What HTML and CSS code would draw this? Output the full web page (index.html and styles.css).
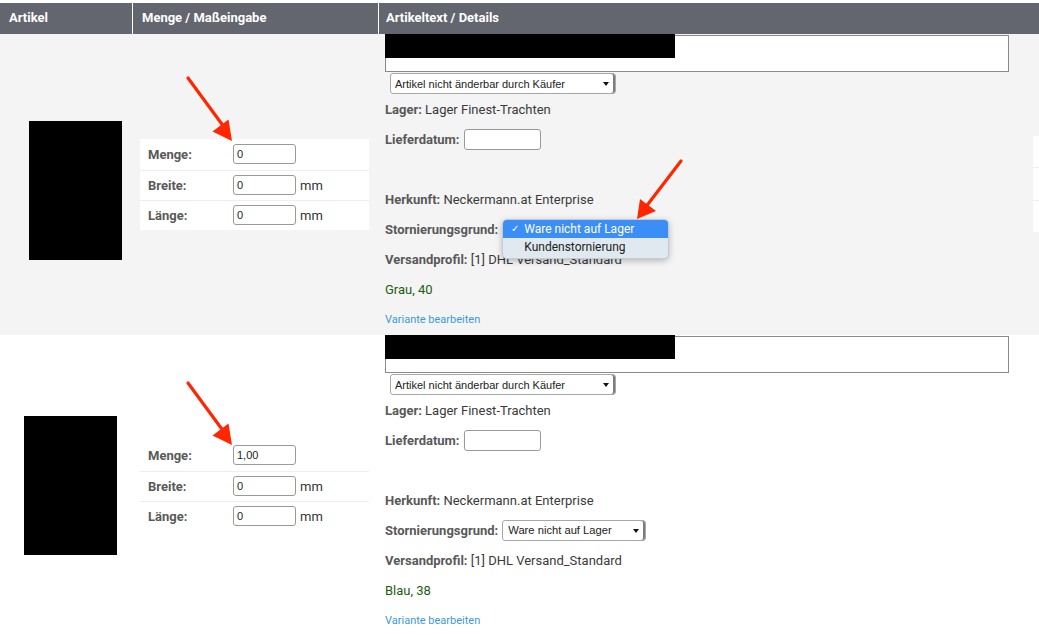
FILE: index.html
```html
<!DOCTYPE html>
<html lang="de">
<head>
<meta charset="utf-8">
<title>Artikel</title>
<link rel="stylesheet" href="styles.css">
</head>
<body>
<div class="page">
  <div class="grid head">
    <div class="hcell">Artikel</div>
    <div class="hcell">Menge / Maßeingabe</div>
    <div class="hcell last">Artikeltext / Details</div>
  </div>

  <div class="grid row alt">
    <div class="c1 c1-first"><div class="img"></div></div>
    <div class="c2">
      <table class="dims">
        <tr><td class="lab">Menge:</td><td><span class="inp">0</span></td></tr>
        <tr><td class="lab">Breite:</td><td><span class="inp">0</span><span class="unit">mm</span></td></tr>
        <tr><td class="lab">Länge:</td><td><span class="inp">0</span><span class="unit">mm</span></td></tr>
      </table>
    </div>
    <div class="c3">
      <div class="tbox"><div class="redact"></div></div>
      <div class="selrow"><span class="sel sel-wide"><span class="seltext">Artikel nicht änderbar durch Käufer</span><span class="caret"></span></span></div>
      <div class="line"><b>Lager:</b>&nbsp;Lager Finest-Trachten</div>
      <div class="line"><b>Lieferdatum:</b><span class="date"></span></div>
      <div class="line"></div>
      <div class="line"><b>Herkunft:</b>&nbsp;Neckermann.at Enterprise</div>
      <div class="line"><b>Stornierungsgrund:</b><span class="anchor"><span class="menu"><span class="opt on"><span class="chk">✓</span>Ware nicht auf Lager</span><span class="opt">Kundenstornierung</span></span></span></div>
      <div class="line"><b>Versandprofil:</b>&nbsp;[1] DHL Versand_Standard</div>
      <div class="line green">Grau, 40</div>
      <div class="line link">Variante bearbeiten</div>
    </div>
    <div class="edge"><span></span><span></span><span></span></div>
  </div>

  <div class="grid row">
    <div class="c1 c1-second"><div class="img"></div></div>
    <div class="c2">
      <table class="dims">
        <tr><td class="lab">Menge:</td><td><span class="inp">1,00</span></td></tr>
        <tr><td class="lab">Breite:</td><td><span class="inp">0</span><span class="unit">mm</span></td></tr>
        <tr><td class="lab">Länge:</td><td><span class="inp">0</span><span class="unit">mm</span></td></tr>
      </table>
    </div>
    <div class="c3">
      <div class="tbox"><div class="redact"></div></div>
      <div class="selrow"><span class="sel sel-wide"><span class="seltext">Artikel nicht änderbar durch Käufer</span><span class="caret"></span></span></div>
      <div class="line"><b>Lager:</b>&nbsp;Lager Finest-Trachten</div>
      <div class="line"><b>Lieferdatum:</b><span class="date"></span></div>
      <div class="line"></div>
      <div class="line"><b>Herkunft:</b>&nbsp;Neckermann.at Enterprise</div>
      <div class="line"><b>Stornierungsgrund:</b><span class="sel sel-storno"><span class="seltext big">Ware nicht auf Lager</span><span class="caret"></span></span></div>
      <div class="line"><b>Versandprofil:</b>&nbsp;[1] DHL Versand_Standard</div>
      <div class="line green">Blau, 38</div>
      <div class="line link">Variante bearbeiten</div>
    </div>
  </div>

  <svg class="arrows" width="1039" height="635" viewBox="0 0 1039 635">
    <g stroke="#ff2600" stroke-width="3.2" stroke-linecap="round" fill="#ff2600">
      <line x1="188" y1="78" x2="224" y2="127"/>
      <polygon stroke="none" points="232,141 212.5,131.5 228.5,119.5"/>
      <line x1="681" y1="161" x2="645" y2="208"/>
      <polygon stroke="none" points="637,219 640,199 656,211"/>
      <line x1="188" y1="383" x2="224" y2="432"/>
      <polygon stroke="none" points="232,445 212.5,435.5 228.5,423.5"/>
    </g>
  </svg>
</div>
</body>
</html>
```

FILE: styles.css
```css
* { box-sizing: border-box; }
html, body { margin: 0; padding: 0; background: #fff; }
body {
  font-family: Roboto, "Liberation Sans", Arial, sans-serif;
  font-size: 13px;
  color: #3a3a3a;
}
.page { position: relative; width: 1039px; height: 635px; overflow: hidden; padding-top: 3px; }

.grid { display: grid; grid-template-columns: 133px 246px 1fr; }

.head { height: 31px; background: #63656f; }
.hcell {
  color: #fff; font-weight: 700; font-size: 13px;
  padding-left: 9px; line-height: 30px;
  border-right: 1px solid #fff;
}
.hcell.last { border-right: none; padding-left: 7px; }

.row { height: 301px; position: relative; }
.row.alt { background: #f4f4f4; }

.c1 { display: flex; align-items: center; }
.c1-first { padding-left: 29px; padding-top: 12px; }
.c1-second { padding-left: 24px; }
.img { width: 93px; height: 139px; background: #000; }

.c2 { display: flex; align-items: center; padding-left: 7px; }
.dims { width: 229px; background: #fff; border-collapse: collapse; }
.dims td { padding: 0; height: 30px; vertical-align: middle; }
.dims tr:first-child td { height: 31px; }
.dims tr + tr td { border-top: 1px solid #eeeeee; }
.dims .lab { width: 93px; padding-left: 8px; font-weight: 700; color: #595959; }
.inp {
  display: inline-block; vertical-align: middle;
  width: 63px; height: 20px; border: 1px solid #9a9a9a; border-radius: 3px;
  background: #fff; padding-left: 3px;
  font-family: "Liberation Sans", Arial, sans-serif; font-size: 11px; line-height: 18px; color: #222;
}
.unit { margin-left: 4px; vertical-align: middle; color: #333; }

.c3 { padding-left: 6px; }
.tbox {
  position: relative; margin-top: 1px;
  width: 624px; height: 37px; border: 1px solid #8a8a8a; background: #fff;
}
.redact { position: absolute; left: -1px; top: -2px; width: 290px; height: 24px; background: #000; }

.selrow { margin: 1px 0 0 5px; height: 21px; display: flex; }
.sel {
  display: inline-flex; align-items: center; height: 21px;
  border: 1px solid #a8a8a8; border-radius: 3px; background: #fff;
  box-shadow: inset -2px 0 0 #7c7c7c;
  font-family: "Liberation Sans", Arial, sans-serif; font-size: 11px; color: #222;
}
.sel-wide { width: 226px; }
.sel-storno { width: 144px; margin-left: 4px; }
.seltext { flex: 1; padding-left: 4px; white-space: nowrap; }
.seltext.big { padding-left: 5px; font-size: 11.2px; }
.caret { width: 16px; height: 100%; position: relative; }
.caret::after {
  content: ""; position: absolute; left: 4px; top: 8px;
  border-left: 3px solid transparent; border-right: 3px solid transparent;
  border-top: 4px solid #111;
}

.line { height: 30px; display: flex; align-items: center; white-space: nowrap; }
.line b { color: #595959; font-weight: 700; }
.date {
  display: inline-block; margin-left: 4px; width: 77px; height: 21px;
  border: 1px solid #9a9a9a; border-radius: 3px; background: #fff;
}
.green { color: #1b5e0c; }
.link { color: #3c9bd6; font-size: 11px; }

.anchor { position: relative; align-self: stretch; margin-left: 4px; }
.menu {
  position: absolute; left: 0; top: 5px; width: 167px; height: 40px;
  background: #dfe9ef; border: 1px solid #c4ccd3; border-radius: 5px;
  box-shadow: 0 2px 6px rgba(0,0,0,0.25);
  overflow: hidden; display: flex; flex-direction: column;
  font-size: 12px; color: #222;
}
.opt { height: 18px; line-height: 18px; padding-left: 21px; position: relative; }
.opt.on { background: #3a8ef5; color: #fff; height: 18px; }
.chk { position: absolute; left: 8px; top: 0; font-size: 10px; }

.edge {
  position: absolute; left: 1033px; top: 102px; width: 6px; height: 96px;
  background: #fff; display: flex; flex-direction: column;
}
.edge span { flex: 1; }
.edge span + span { border-top: 1px solid #eeeeee; }

.arrows { position: absolute; left: 0; top: 0; pointer-events: none; }
```
